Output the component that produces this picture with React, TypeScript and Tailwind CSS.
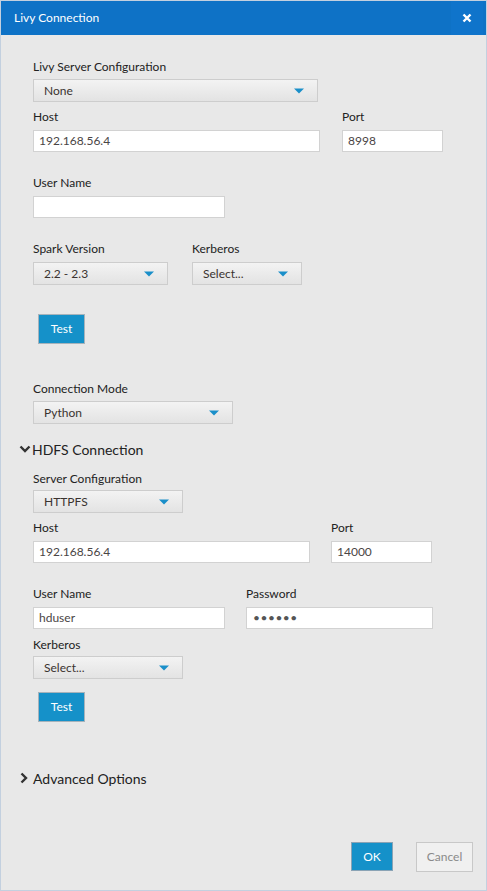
import { ReactNode } from "react";

const font = { fontFamily: "Lato, 'Noto Sans', sans-serif" };

function Label({ children, className = "" }: { children: ReactNode; className?: string }) {
  return <div className={`h-4 text-[12px] leading-4 text-[#222] ${className}`}>{children}</div>;
}

function Select({ value, width, className = "" }: { value: string; width: string; className?: string }) {
  return (
    <div
      className={`flex h-[23px] items-center justify-between border border-[#cdcdcd] bg-gradient-to-b from-[#f3f3f3] to-[#e3e3e3] pl-[10px] pr-[13px] text-[12px] text-[#3a3330] ${width} ${className}`}
    >
      <span>{value}</span>
      <svg width="10" height="6" viewBox="0 0 10 6">
        <path d="M0 0.5 H10 L5 5.5 Z" fill="#1a8fc9" />
      </svg>
    </div>
  );
}

function Input({ value, width, className = "" }: { value: string; width: string; className?: string }) {
  return (
    <div
      className={`flex h-[22px] items-center border border-[#d2d2d2] bg-white px-[5px] text-[12px] text-[#4a4545] ${width} ${className}`}
    >
      {value}
    </div>
  );
}

function TestButton({ className = "" }: { className?: string }) {
  return (
    <div
      className={`ml-[5px] flex h-[30px] w-[47px] items-center justify-center border border-[#a6b3bb] bg-[#1591c9] text-[12px] text-white ${className}`}
    >
      Test
    </div>
  );
}

function Chevron({ down }: { down?: boolean }) {
  return down ? (
    <svg width="12" height="8" viewBox="0 0 12 8" className="mr-[1px]">
      <path d="M1.5 1.5 L6 6 L10.5 1.5" stroke="#333" strokeWidth="2.4" fill="none" />
    </svg>
  ) : (
    <svg width="8" height="12" viewBox="0 0 8 12" className="mr-[5px]">
      <path d="M1.5 1.5 L6 6 L1.5 10.5" stroke="#333" strokeWidth="2.4" fill="none" />
    </svg>
  );
}

export default function App() {
  return (
    <div
      style={font}
      className="flex h-[891px] w-[487px] flex-col border border-[#c3d0df] bg-[#e8e8e8]"
    >
      <div className="flex h-[34px] shrink-0 items-center justify-between bg-[#0e72c6] pl-[13px]">
        <span className="text-[12px] text-white">Livy Connection</span>
        <div className="mr-[3px] flex h-full w-[32px] items-center justify-center bg-[#0f74cb]">
          <svg width="10" height="10" viewBox="0 0 10 10">
            <path d="M1.5 1.5 L8.5 8.5 M8.5 1.5 L1.5 8.5" stroke="white" strokeWidth="2.4" />
          </svg>
        </div>
      </div>

      <div className="flex flex-1 flex-col pl-[32px]">
        <Label className="mt-[24px]">Livy Server Configuration</Label>
        <Select value="None" width="w-[285px]" className="mt-[4px]" />

        <div className="mt-[7px] flex">
          <div>
            <Label>Host</Label>
            <Input value="192.168.56.4" width="w-[287px]" className="mt-[5px]" />
          </div>
          <div className="ml-[22px]">
            <Label>Port</Label>
            <Input value="8998" width="w-[101px]" className="mt-[5px]" />
          </div>
        </div>

        <Label className="mt-[23px]">User Name</Label>
        <Input value="" width="w-[192px]" className="mt-[5px]" />

        <div className="mt-[23px] flex">
          <div>
            <Label>Spark Version</Label>
            <Select value="2.2 - 2.3" width="w-[135px]" className="mt-[5px]" />
          </div>
          <div className="ml-[24px]">
            <Label>Kerberos</Label>
            <Select value="Select..." width="w-[110px]" className="mt-[5px]" />
          </div>
        </div>

        <TestButton className="mt-[29px]" />

        <Label className="mt-[37px]">Connection Mode</Label>
        <Select value="Python" width="w-[200px]" className="mt-[4px]" />

        <div className="-ml-[14px] mt-[16px] flex h-[18px] items-center text-[14px] text-[#222]">
          <Chevron down />
          HDFS Connection
        </div>

        <Label className="mt-[13px]">Server Configuration</Label>
        <Select value="HTTPFS" width="w-[150px]" className="mt-[3px]" />

        <div className="mt-[7px] flex">
          <div>
            <Label>Host</Label>
            <Input value="192.168.56.4" width="w-[277px]" className="mt-[5px]" />
          </div>
          <div className="ml-[21px]">
            <Label>Port</Label>
            <Input value="14000" width="w-[101px]" className="mt-[5px]" />
          </div>
        </div>

        <div className="mt-[23px] flex">
          <div>
            <Label>User Name</Label>
            <Input value="hduser" width="w-[192px]" className="mt-[5px]" />
          </div>
          <div className="ml-[21px]">
            <Label>Password</Label>
            <Input
              value="••••••"
              width="w-[187px]"
              className="mt-[5px] pl-[6px] text-[7px] tracking-[0.5px] text-[#555]"
            />
          </div>
        </div>

        <Label className="mt-[8px]">Kerberos</Label>
        <Select value="Select..." width="w-[150px]" className="mt-[3px]" />

        <TestButton className="mt-[13px]" />

        <div className="-ml-[13px] mt-[47px] flex h-[18px] items-center text-[14px] text-[#222]">
          <Chevron />
          Advanced Options
        </div>

        <div className="mb-[18px] mr-[13px] mt-auto flex justify-end gap-[23px]">
          <div className="flex h-[29px] w-[42px] items-center justify-center border border-[#8aa3b5] bg-[#1591c9] text-[12px] text-white">
            OK
          </div>
          <div className="flex h-[30px] w-[57px] items-center justify-center border border-[#c8c8c8] bg-[#f0f0f0] text-[12px] text-[#8a8a8a]">
            Cancel
          </div>
        </div>
      </div>
    </div>
  );
}
